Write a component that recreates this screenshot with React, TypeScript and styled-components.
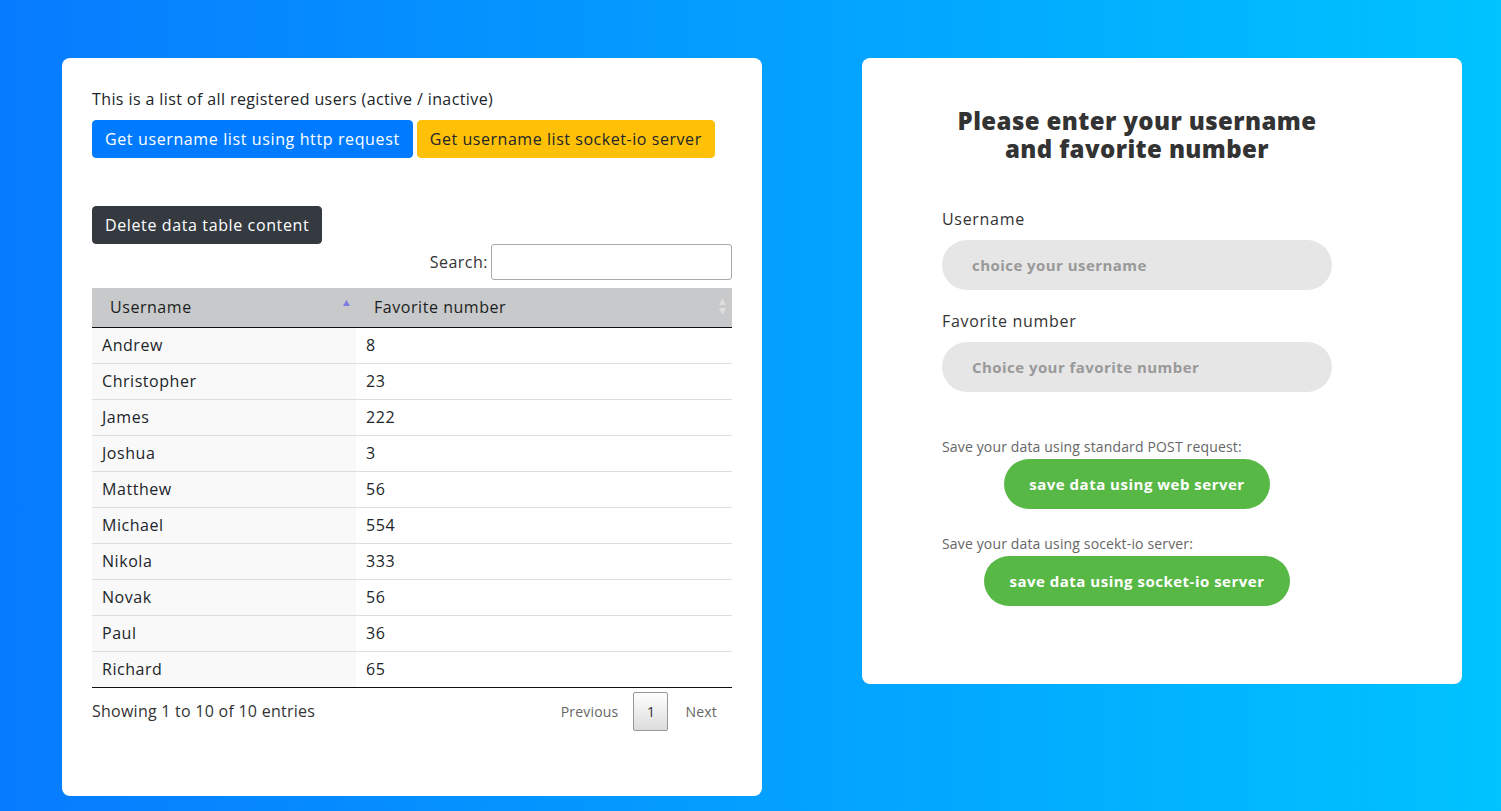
import React from "react";
import styled, { createGlobalStyle } from "styled-components";

const Global = createGlobalStyle`
  html, body { margin: 0; padding: 0; }
  body { font-family: "Open Sans", "Liberation Sans", sans-serif; color: #212529; }
  * { box-sizing: border-box; }
`;

const Page = styled.div`
  min-height: 811px;
  background: linear-gradient(to right, #077bff, #00c3ff);
  display: flex;
  align-items: flex-start;
  gap: 100px;
  padding: 58px 39px 15px 62px;
`;

const Card = styled.div<{ $w: number }>`
  width: ${(p) => p.$w}px;
  background: #fff;
  border-radius: 8px;
`;

const LeftCard = styled(Card)`
  padding: 29px 30px 30px;
  min-height: 738px;
`;

const Intro = styled.p`
  margin: 0 0 9px;
  font-size: 16px;
  line-height: 24px;
  letter-spacing: 0.4px;
  color: #212529;
`;

const BtnRow = styled.div`
  display: flex;
  gap: 4px;
`;

const Btn = styled.button<{ $bg: string; $fg: string; $ls?: number }>`
  font-family: inherit;
  font-size: 16px;
  line-height: 24px;
  letter-spacing: ${(p) => p.$ls ?? 0.55}px;
  padding: 6px 12px;
  border: 1px solid ${(p) => p.$bg};
  border-radius: 4px;
  background: ${(p) => p.$bg};
  color: ${(p) => p.$fg};
  cursor: pointer;
`;

const DeleteWrap = styled.div`
  margin-top: 48px;
`;

const SearchRow = styled.div`
  display: flex;
  justify-content: flex-end;
  align-items: center;
  gap: 3px;
  font-size: 16px;
  letter-spacing: 0.5px;
  color: #333;
`;

const SearchInput = styled.input`
  width: 241px;
  height: 36px;
  border: 1px solid #aaa;
  border-radius: 3px;
  padding: 5px;
  font-family: inherit;
`;

const Table = styled.table`
  width: 640px;
  margin-top: 8px;
  border-collapse: collapse;
  border-bottom: 1px solid #111;
  font-size: 16px;
  letter-spacing: 0.55px;
`;

const Th = styled.th<{ $w?: number }>`
  position: relative;
  text-align: left;
  font-weight: 500;
  background: #c8c9cb;
  height: 39px;
  padding: 0 18px;
  border-bottom: 1px solid #111;
  color: #1b1e21;
  width: ${(p) => (p.$w ? `${p.$w}px` : "auto")};
`;

const SortIcon = styled.svg<{ $r: number }>`
  position: absolute;
  right: ${(p) => p.$r}px;
  top: 9px;
`;

const Tr = styled.tr`
  & + & td { border-top: 1px solid #ddd; }
`;

const Td = styled.td<{ $sorted?: boolean }>`
  height: 36px;
  padding: 0 10px;
  background: ${(p) => (p.$sorted ? "#f9f9f9" : "#fff")};
  color: #212529;
`;

const Footer = styled.div`
  display: flex;
  justify-content: space-between;
  align-items: center;
  margin-top: 4px;
`;

const Info = styled.div`
  font-size: 16px;
  letter-spacing: 0.25px;
  color: #333;
`;

const Pager = styled.div`
  display: flex;
  align-items: center;
`;

const PageLink = styled.span`
  font-size: 14px;
  letter-spacing: 0.2px;
  color: #666;
  padding: 0 15px 0 17px;
  line-height: 39px;
`;

const PageCurrent = styled.span`
  display: inline-flex;
  align-items: center;
  justify-content: center;
  width: 35px;
  height: 39px;
  border: 1px solid #979797;
  border-radius: 2px;
  background: linear-gradient(to bottom, #fff 0%, #dcdcdc 100%);
  font-size: 14px;
  color: #333;
`;

const RightCard = styled(Card)`
  padding: 49px 130px 78px 80px;
  min-height: 626px;
`;

const Title = styled.h2`
  margin: 0;
  font-size: 24px;
  line-height: 28px;
  letter-spacing: 0.4px;
  font-weight: 800;
  text-align: center;
  color: #333;
`;

const Label = styled.div<{ $mt: number }>`
  margin-top: ${(p) => p.$mt}px;
  font-size: 16px;
  line-height: 24px;
  letter-spacing: 0.7px;
  color: #333;
`;

const Field = styled.input`
  display: block;
  width: 390px;
  height: 50px;
  margin-top: 9px;
  border: none;
  border-radius: 25px;
  background: #e6e6e6;
  padding: 0 30px;
  font-family: inherit;
  font-size: 15px;
  letter-spacing: 0.45px;
  font-weight: 700;
  color: #333;
  outline: none;
  &::placeholder { color: #999; opacity: 1; }
`;

const Note = styled.div<{ $mt: number }>`
  margin-top: ${(p) => p.$mt}px;
  font-size: 14px;
  line-height: 20px;
  letter-spacing: 0.15px;
  color: #666;
`;

const GreenRow = styled.div`
  display: flex;
  justify-content: center;
  margin-top: 2px;
`;

const GreenBtn = styled.button`
  height: 50px;
  border: none;
  border-radius: 25px;
  background: #57b846;
  color: #fff;
  font-family: inherit;
  font-size: 15px;
  letter-spacing: 0.5px;
  font-weight: 700;
  padding: 0 25px;
  cursor: pointer;
`;

const rows: [string, string][] = [
  ["Andrew", "8"],
  ["Christopher", "23"],
  ["James", "222"],
  ["Joshua", "3"],
  ["Matthew", "56"],
  ["Michael", "554"],
  ["Nikola", "333"],
  ["Novak", "56"],
  ["Paul", "36"],
  ["Richard", "65"],
];

export default function App() {
  return (
    <>
      <Global />
      <Page>
        <LeftCard $w={700}>
          <Intro>This is a list of all registered users (active / inactive)</Intro>
          <BtnRow>
            <Btn $bg="#007bff" $fg="#fff" $ls={0.62}>Get username list using http request</Btn>
            <Btn $bg="#ffc107" $fg="#212529">Get username list socket-io server</Btn>
          </BtnRow>
          <DeleteWrap>
            <Btn $bg="#343a40" $fg="#fff" $ls={0.62}>Delete data table content</Btn>
          </DeleteWrap>
          <SearchRow>
            Search:
            <SearchInput type="search" />
          </SearchRow>
          <Table>
            <thead>
              <tr>
                <Th $w={264}>
                  Username
                  <SortIcon $r={5} width="9" height="20" viewBox="0 0 9 20">
                    <path d="M4.5 3 L8 9 L1 9 Z" fill="#7b7be3" />
                  </SortIcon>
                </Th>
                <Th>
                  Favorite number
                  <SortIcon $r={5} width="9" height="20" viewBox="0 0 9 20">
                    <path d="M4.5 1 L8 8 L1 8 Z" fill="#dedede" />
                    <path d="M4.5 18 L8 11 L1 11 Z" fill="#dedede" />
                  </SortIcon>
                </Th>
              </tr>
            </thead>
            <tbody>
              {rows.map(([n, v]) => (
                <Tr key={n}>
                  <Td $sorted>{n}</Td>
                  <Td>{v}</Td>
                </Tr>
              ))}
            </tbody>
          </Table>
          <Footer>
            <Info>Showing 1 to 10 of 10 entries</Info>
            <Pager>
              <PageLink>Previous</PageLink>
              <PageCurrent>1</PageCurrent>
              <PageLink>Next</PageLink>
            </Pager>
          </Footer>
        </LeftCard>
        <RightCard $w={600}>
          <Title>
            Please enter your username
            <br />
            and favorite number
          </Title>
          <Label $mt={44}>Username</Label>
          <Field placeholder="choice your username" />
          <Label $mt={19}>Favorite number</Label>
          <Field placeholder="Choice your favorite number" />
          <Note $mt={45}>Save your data using standard POST request:</Note>
          <GreenRow>
            <GreenBtn>save data using web server</GreenBtn>
          </GreenRow>
          <Note $mt={25}>Save your data using socekt-io server:</Note>
          <GreenRow>
            <GreenBtn>save data using socket-io server</GreenBtn>
          </GreenRow>
        </RightCard>
      </Page>
    </>
  );
}
